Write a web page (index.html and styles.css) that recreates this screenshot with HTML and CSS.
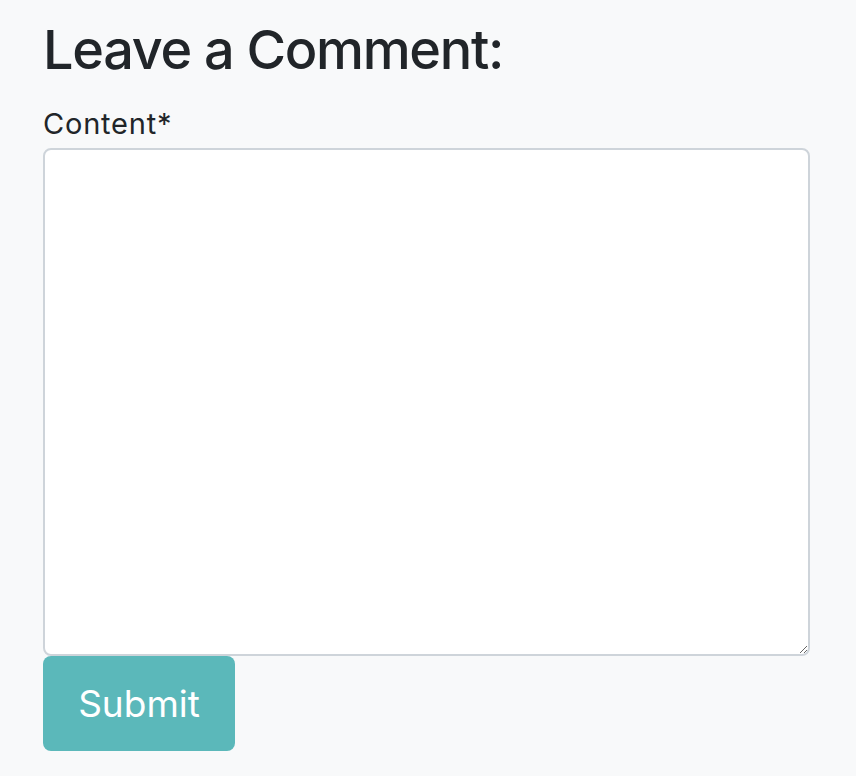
FILE: index.html
```html
<!DOCTYPE html>
<html lang="en">
<head>
<meta charset="utf-8">
<title>Leave a Comment</title>
<link rel="stylesheet" href="styles.css">
</head>
<body>
<main class="page">
  <form class="comment-form">
    <h3 class="title">Leave a Comment:</h3>
    <label class="label" for="content">Content*</label>
    <textarea id="content" class="textarea"></textarea>
    <button type="submit" class="btn">Submit</button>
  </form>
</main>
</body>
</html>
```
FILE: styles.css
```css
html, body {
  margin: 0;
  background: #f8f9fa;
}
body {
  font-family: Inter, "Noto Sans", sans-serif;
  color: #212529;
}
.page {
  padding: 16px 0 0 43px;
}
.comment-form {
  width: 767px;
  display: flex;
  flex-direction: column;
  align-items: flex-start;
}
.title {
  margin: 0 0 23px;
  font-size: 54px;
  font-weight: 500;
  line-height: 67px;
  letter-spacing: -1.3px;
}
.label {
  font-size: 29px;
  line-height: 36px;
  letter-spacing: 0.8px;
  margin-bottom: 6px;
}
.textarea {
  box-sizing: border-box;
  width: 767px;
  height: 508px;
  margin: 0;
  border: 2px solid #ced4da;
  border-radius: 8px;
  background: #fff;
  font-family: inherit;
  font-size: 24px;
  padding: 12px 18px;
}
.btn {
  box-sizing: border-box;
  width: 192px;
  height: 95px;
  margin: 0;
  border: none;
  border-radius: 8px;
  background: #5bb8ba;
  color: #fff;
  font-family: inherit;
  font-size: 37px;
  line-height: 54px;
  padding: 0;
}
```
